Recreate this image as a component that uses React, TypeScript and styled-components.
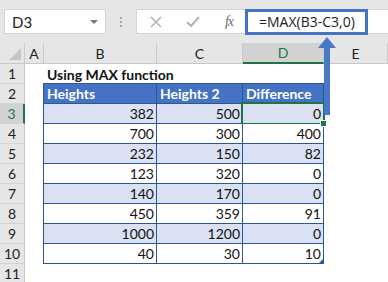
import styled, { createGlobalStyle, css } from "styled-components";

const GlobalStyle = createGlobalStyle`
  html, body {
    margin: 0;
    padding: 0;
    background: #ffffff;
  }
  body {
    font-family: Lato, "Liberation Sans", sans-serif;
  }
`;

const Window = styled.div`
  position: relative;
  width: 388px;
  height: 282px;
  overflow: hidden;
  background: #ffffff;
`;

const FormulaBar = styled.div`
  display: flex;
  align-items: center;
  height: 43px;
  padding: 0 0 0 4px;
  background: #e6e6e6;
  box-sizing: border-box;
`;

const NameBox = styled.div`
  display: flex;
  align-items: center;
  justify-content: space-between;
  width: 102px;
  height: 25px;
  padding: 0 7px 0 7px;
  box-sizing: border-box;
  background: #ffffff;
  border: 1px solid #d4d4d4;
  font-size: 15px;
  color: #222222;
`;

const DropArrow = styled.span`
  width: 0;
  height: 0;
  border-left: 4px solid transparent;
  border-right: 4px solid transparent;
  border-top: 4px solid #777777;
`;

const Grip = styled.div`
  display: flex;
  flex-direction: column;
  gap: 2px;
  margin: 0 14px 0 14px;
  span {
    width: 2px;
    height: 2px;
    background: #a8a8a8;
  }
`;

const ButtonStrip = styled.div`
  display: flex;
  align-items: center;
  justify-content: space-between;
  width: 109px;
  height: 25px;
  padding: 0 12px 0 13px;
  box-sizing: border-box;
  background: #ffffff;
  border: 1px solid #d4d4d4;
  border-right: none;
`;

const Fx = styled.span`
  font-family: "Liberation Serif", serif;
  font-style: italic;
  font-size: 14px;
  color: #6b6b6b;
  letter-spacing: -1px;
`;

const FormulaInput = styled.div`
  flex: 1;
  display: flex;
  align-items: center;
  height: 25px;
  background: #ffffff;
  border-top: 1px solid #d4d4d4;
  border-bottom: 1px solid #d4d4d4;
  box-sizing: border-box;
`;

const Highlight = styled.div`
  display: flex;
  align-items: center;
  width: 123px;
  height: 26px;
  padding-left: 11px;
  box-sizing: border-box;
  border: 3px solid #4472c4;
  font-family: "Open Sans", sans-serif;
  font-size: 14px;
  color: #222222;
`;

const Sheet = styled.div`
  display: grid;
  grid-template-columns: 25px 19px 113px 86px 81px 1fr;
  grid-template-rows: 21px repeat(11, 20px);
`;

const ColHead = styled.div<{ $active?: boolean }>`
  display: flex;
  align-items: center;
  justify-content: center;
  background: ${(p) => (p.$active ? "#d2d2d2" : "#e6e6e6")};
  border-right: 1px solid #c8c8c8;
  border-bottom: ${(p) => (p.$active ? "2px solid #217346" : "1px solid #c8c8c8")};
  box-sizing: border-box;
  font-size: 14px;
  color: ${(p) => (p.$active ? "#217346" : "#222222")};
  &:last-child {
    border-right: none;
  }
`;

const Corner = styled.div`
  position: relative;
  background: #e6e6e6;
  border-right: 1px solid #c8c8c8;
  border-bottom: 1px solid #c8c8c8;
  box-sizing: border-box;
  &::after {
    content: "";
    position: absolute;
    right: 3px;
    bottom: 3px;
    border-left: 12px solid transparent;
    border-bottom: 12px solid #c4c4c4;
  }
`;

const RowHead = styled.div<{ $active?: boolean }>`
  display: flex;
  align-items: center;
  justify-content: center;
  background: ${(p) => (p.$active ? "#d2d2d2" : "#e6e6e6")};
  border-right: ${(p) => (p.$active ? "2px solid #217346" : "1px solid #c8c8c8")};
  border-bottom: 1px solid #d4d4d4;
  box-sizing: border-box;
  font-size: 14px;
  color: ${(p) => (p.$active ? "#217346" : "#222222")};
`;

const Blank = styled.div``;

const Title = styled.div`
  grid-column: 3 / 6;
  display: flex;
  align-items: center;
  padding-left: 3px;
  font-size: 14px;
  font-weight: 700;
  color: #111111;
`;

type CellKind = "head" | "band" | "plain";

const Cell = styled.div<{ $kind: CellKind; $first?: boolean; $top?: boolean; $selected?: boolean }>`
  position: relative;
  display: flex;
  align-items: center;
  justify-content: ${(p) => (p.$kind === "head" ? "flex-start" : "flex-end")};
  padding: 0 2px 0 3px;
  box-sizing: border-box;
  font-size: 14px;
  border-right: 1px solid #2f5597;
  border-bottom: 1px solid #2f5597;
  ${(p) => p.$first && css`border-left: 1px solid #2f5597; margin-left: -1px;`}
  ${(p) => p.$top && css`border-top: 1px solid #2f5597; margin-top: -1px;`}
  background: ${(p) =>
    p.$kind === "head" ? "#4472c4" : p.$kind === "band" ? "#d9e1f2" : "#ffffff"};
  color: ${(p) => (p.$kind === "head" ? "#ffffff" : "#111111")};
  font-weight: ${(p) => (p.$kind === "head" ? 700 : 400)};
  ${(p) =>
    p.$selected &&
    css`
      &::after {
        content: "";
        position: absolute;
        left: -2px;
        top: -2px;
        right: -2px;
        bottom: -2px;
        border: 2px solid #217346;
      }
      &::before {
        content: "";
        position: absolute;
        right: -4px;
        bottom: -4px;
        width: 5px;
        height: 5px;
        background: #217346;
        border: 1px solid #ffffff;
        z-index: 2;
      }
    `}
`;

const ResizeMark = styled.span`
  position: absolute;
  right: 0;
  bottom: 0;
  width: 0;
  height: 0;
  border-left: 4px solid transparent;
  border-bottom: 4px solid #2f5597;
`;

const Arrow = styled.svg`
  position: absolute;
  left: 317px;
  top: 37px;
  z-index: 5;
`;

const columns = ["A", "B", "C", "D", "E"];

const data: [number, number, number][] = [
  [382, 500, 0],
  [700, 300, 400],
  [232, 150, 82],
  [123, 320, 0],
  [140, 170, 0],
  [450, 359, 91],
  [1000, 1200, 0],
  [40, 30, 10],
];

export default function App() {
  return (
    <Window>
      <GlobalStyle />
      <FormulaBar>
        <NameBox>
          D3
          <DropArrow />
        </NameBox>
        <Grip>
          <span />
          <span />
          <span />
        </Grip>
        <ButtonStrip>
          <svg width="12" height="12" viewBox="0 0 12 12">
            <path d="M1 1 L11 11 M11 1 L1 11" stroke="#b4b4b4" strokeWidth="1.6" />
          </svg>
          <svg width="14" height="12" viewBox="0 0 14 12">
            <path d="M1 6 L5 10 L13 1" stroke="#b4b4b4" strokeWidth="2" fill="none" />
          </svg>
          <Fx>fx</Fx>
        </ButtonStrip>
        <FormulaInput>
          <Highlight>=MAX(B3-C3,0)</Highlight>
        </FormulaInput>
      </FormulaBar>

      <Sheet>
        <Corner />
        {columns.map((c) => (
          <ColHead key={c} $active={c === "D"}>
            {c}
          </ColHead>
        ))}

        <RowHead>1</RowHead>
        <Blank />
        <Title>Using MAX function</Title>
        <Blank />

        <RowHead>2</RowHead>
        <Blank />
        <Cell $kind="head" $first $top>Heights</Cell>
        <Cell $kind="head" $top>Heights 2</Cell>
        <Cell $kind="head" $top>Difference</Cell>
        <Blank />

        {data.map((row, i) => {
          const kind: CellKind = i % 2 === 0 ? "band" : "plain";
          const last = i === data.length - 1;
          return [
            <RowHead key={`h${i}`} $active={i === 0}>
              {i + 3}
            </RowHead>,
            <Blank key={`a${i}`} />,
            <Cell key={`b${i}`} $kind={kind} $first>
              {row[0]}
            </Cell>,
            <Cell key={`c${i}`} $kind={kind}>
              {row[1]}
            </Cell>,
            <Cell key={`d${i}`} $kind={kind} $selected={i === 0}>
              {row[2]}
              {last && <ResizeMark />}
            </Cell>,
            <Blank key={`e${i}`} />,
          ];
        })}

        <RowHead>11</RowHead>
      </Sheet>

      <Arrow width="20" height="78" viewBox="0 0 20 78">
        <path d="M10 0 L19 11 L13 11 L13 78 L7 78 L7 11 L1 11 Z" fill="#4a78c8" />
      </Arrow>
    </Window>
  );
}
